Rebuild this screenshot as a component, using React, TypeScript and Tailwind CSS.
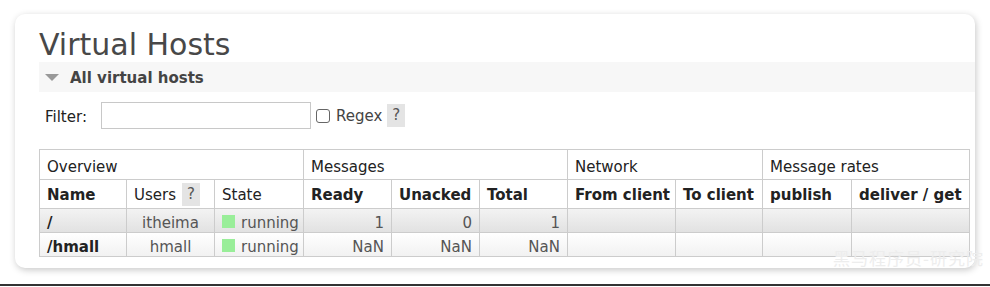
const font = { fontFamily: '"DejaVu Sans", Verdana, sans-serif' };

const rows = [
  { name: '/', user: 'itheima', ready: '1', unacked: '0', total: '1', shade: 'bg-gradient-to-b from-[#f3f3f3] to-[#e1e1e1]' },
  { name: '/hmall', user: 'hmall', ready: 'NaN', unacked: 'NaN', total: 'NaN', shade: 'bg-gradient-to-b from-[#ffffff] to-[#f1f1f1]' },
];

function Help({ className = '' }: { className?: string }) {
  return (
    <span className={`inline-flex h-[23px] w-[18px] items-center justify-center bg-[#e4e4e4] text-[15px] text-[#555] ${className}`}>
      ?
    </span>
  );
}

export default function App() {
  return (
    <div className="relative h-[287px] w-[990px] overflow-hidden bg-white text-[15px] text-[#222]" style={font}>
      {/* Card */}
      <div className="absolute left-[15px] top-[14px] h-[254px] w-[960px] overflow-hidden rounded-[10px] bg-white shadow-[1px_2px_7px_rgba(0,0,0,0.22)]">
        <div className="pl-[24px]">
          <h1 className="pt-[13px] text-[30px] leading-[35px] text-[#484848]">Virtual Hosts</h1>

          {/* Section header */}
          <div className="flex h-[30px] items-center bg-[#f7f7f7] pl-[6px]">
            <span className="mt-[1px] h-0 w-0 border-l-[7px] border-r-[7px] border-t-[7px] border-l-transparent border-r-transparent border-t-[#999]" />
            <span className="ml-[11px] pt-[2px] text-[15px] font-bold text-[#444]">All virtual hosts</span>
          </div>

          {/* Filter */}
          <div className="mt-[10px] flex items-center">
            <span className="ml-[6px] pt-[3px] text-[15px] text-[#222]">Filter:</span>
            <input className="ml-[14px] h-[27px] w-[210px] border border-[#c8c8c8] outline-none" />
            <span className="ml-[5px] h-[14px] w-[14px] rounded-[3px] border border-[#666] bg-white" />
            <span className="ml-[6px] pt-[1px] text-[15px] text-[#444]">Regex</span>
            <Help className="ml-[5px]" />
          </div>

          {/* Table */}
          <table className="mt-[20px] table-fixed border-collapse text-[15px] leading-[18px]">
            <colgroup>
              {[87, 88, 89, 88, 88, 88, 108, 87, 89, 118].map((w, i) => (
                <col key={i} style={{ width: w }} />
              ))}
            </colgroup>
            <thead>
              <tr className="h-[30px]">
                <th colSpan={3} className="border border-[#ccc] pl-[7px] pt-[4px] text-left font-normal">Overview</th>
                <th colSpan={3} className="border border-[#ccc] pl-[7px] pt-[4px] text-left font-normal">Messages</th>
                <th colSpan={2} className="border border-[#ccc] pl-[7px] pt-[4px] text-left font-normal">Network</th>
                <th colSpan={2} className="border border-[#ccc] pl-[7px] pt-[4px] text-left font-normal">Message rates</th>
              </tr>
              <tr className="h-[29px]">
                <th className="border border-[#ccc] pl-[7px] pt-[2px] text-left font-bold">Name</th>
                <th className="border border-[#ccc] pl-[7px] text-left font-normal">
                  <span className="flex items-center">
                    <span className="pt-[2px]">Users</span>
                    <Help className="ml-[6px]" />
                  </span>
                </th>
                <th className="border border-[#ccc] pl-[7px] pt-[2px] text-left font-normal">State</th>
                <th className="border border-[#ccc] pl-[7px] pt-[2px] text-left font-bold">Ready</th>
                <th className="border border-[#ccc] pl-[7px] pt-[2px] text-left font-bold">Unacked</th>
                <th className="border border-[#ccc] pl-[7px] pt-[2px] text-left font-bold">Total</th>
                <th className="border border-[#ccc] pl-[7px] pt-[2px] text-left font-bold whitespace-nowrap">From client</th>
                <th className="border border-[#ccc] pl-[7px] pt-[2px] text-left font-bold whitespace-nowrap">To client</th>
                <th className="border border-[#ccc] pl-[7px] pt-[2px] text-left font-bold">publish</th>
                <th className="border border-[#ccc] pl-[7px] pt-[2px] text-left font-bold whitespace-nowrap">deliver / get</th>
              </tr>
            </thead>
            <tbody>
              {rows.map((r) => (
                <tr key={r.name} className={`h-[24px] ${r.shade}`}>
                  <td className="border border-[#ccc] pl-[7px] pt-[4px] font-bold text-[#222]">{r.name}</td>
                  <td className="border border-[#ccc] pt-[4px] text-center text-[#555]">{r.user}</td>
                  <td className="border border-[#ccc] pl-[7px] pt-[2px] text-[#555]">
                    <span className="flex items-center">
                      <span className="h-[13px] w-[13px] bg-[#99ee99]" />
                      <span className="ml-[6px] pt-[2px]">running</span>
                    </span>
                  </td>
                  <td className="border border-[#ccc] pr-[7px] pt-[4px] text-right text-[#555]">{r.ready}</td>
                  <td className="border border-[#ccc] pr-[7px] pt-[4px] text-right text-[#555]">{r.unacked}</td>
                  <td className="border border-[#ccc] pr-[7px] pt-[4px] text-right text-[#555]">{r.total}</td>
                  <td className="border border-[#ccc]" />
                  <td className="border border-[#ccc]" />
                  <td className="border border-[#ccc]" />
                  <td className="border border-[#ccc]" />
                </tr>
              ))}
            </tbody>
          </table>
        </div>
      </div>

      {/* Watermark */}
      <span
        className="absolute left-[833px] top-[246px] text-[17px] leading-[24px] tracking-[1px] text-[#ededed]"
        style={{ fontFamily: '"Noto Sans CJK SC", sans-serif' }}
      >
        黑马程序员-研究院
      </span>

      {/* Bottom rule */}
      <div className="absolute left-0 top-[284px] h-[2px] w-[990px] bg-[#333]" />
    </div>
  );
}
